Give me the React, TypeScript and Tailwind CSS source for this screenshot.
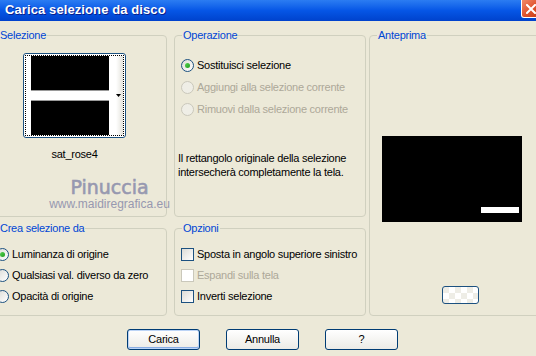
import clsx from "clsx";

const ops = [
  { label: "Sostituisci selezione", checked: true, disabled: false },
  { label: "Aggiungi alla selezione corrente", checked: false, disabled: true },
  { label: "Rimuovi dalla selezione corrente", checked: false, disabled: true },
];

const sources = [
  { label: "Luminanza di origine", checked: true },
  { label: "Qualsiasi val. diverso da zero", checked: false },
  { label: "Opacità di origine", checked: false },
];

const options = [
  { label: "Sposta in angolo superiore sinistro", disabled: false },
  { label: "Espandi sulla tela", disabled: true },
  { label: "Inverti selezione", disabled: false },
];

function Radio({ checked, disabled }: { checked?: boolean; disabled?: boolean }) {
  return (
    <span
      className={clsx(
        "flex h-[13px] w-[13px] shrink-0 items-center justify-center rounded-full border",
        disabled
          ? "border-[#CAC8BB] bg-[#EFEEE6]"
          : "border-[#1C5180] bg-gradient-to-br from-[#DCDCD7] to-white"
      )}
    >
      {checked && <span className="h-[5px] w-[5px] rounded-full bg-gradient-to-br from-[#55D551] to-[#1E9B1E]" />}
    </span>
  );
}

function Checkbox({ disabled }: { disabled?: boolean }) {
  return (
    <span
      className={clsx(
        "h-[13px] w-[13px] shrink-0 border",
        disabled ? "border-[#CAC8BB] bg-white" : "border-[#1C5180] bg-gradient-to-br from-[#DCDCD7] to-white"
      )}
    />
  );
}

function Group({ title, className, children }: { title: string; className?: string; children?: React.ReactNode }) {
  return (
    <fieldset className={clsx("min-w-0 rounded-[4px] border border-[#D0D0BF]", className)}>
      <legend className="ml-[7px] px-[1px] leading-[13px] text-[#0046D5]">{title}</legend>
      {children}
    </fieldset>
  );
}

function Button({ label, primary }: { label: string; primary?: boolean }) {
  return (
    <button
      className={clsx(
        "flex h-[21px] w-[73px] items-center justify-center rounded-[3px] border border-[#003C74] bg-gradient-to-b from-white to-[#ECEBE6] leading-[13px]",
        primary && "shadow-[inset_0_0_0_1px_#BCD4F6,inset_0_-1px_0_1px_#89ADE4]"
      )}
    >
      {label}
    </button>
  );
}

export default function App() {
  return (
    <div className="relative h-[356px] w-[536px] overflow-hidden bg-[#ECE9D8] font-['Liberation_Sans',Arial,sans-serif] text-[11px] tracking-[-0.25px] text-black">
      {/* title bar */}
      <div className="flex h-[21px] items-start justify-between bg-gradient-to-b from-[#2B7CF2] via-[#0656E6] to-[#0042CC]">
        <span className="mt-[2px] pl-[5px] text-[13px] font-bold leading-[16px] tracking-[0.1px] text-white [text-shadow:1px_1px_#0A1F8C]">
          Carica selezione da disco
        </span>
        <span className="-mr-[6px] flex h-[18px] w-[21px] items-center justify-center rounded-b-[3px] border border-t-0 border-white bg-gradient-to-br from-[#F08A6A] via-[#E0532E] to-[#C23A14]">
          <svg width="10" height="10" viewBox="0 0 10 10" className="-ml-[2px]">
            <path d="M1 1 L9 9 M9 1 L1 9" stroke="white" strokeWidth="2" strokeLinecap="square" />
          </svg>
        </span>
      </div>

      {/* body */}
      <div className="-ml-[9px] mt-[8px] flex">
        <div className="flex w-[176px] shrink-0 flex-col gap-[5px]">
          <Group title="Selezione" className="h-[188px]">
            <div className="ml-[31px] mt-[11px] flex w-[103px] flex-col items-center">
              <div className="h-[85px] w-[103px] rounded-[3px] border border-[#1C5180] bg-white p-[1px]">
                <div className="flex h-full border border-dotted border-black pl-[5px]">
                  <div className="flex w-[78px] flex-col">
                    <div className="h-[34px] bg-black" />
                    <div className="h-px bg-[#9A9A9A]" />
                    <div className="h-[9px] bg-white" />
                    <div className="h-px bg-[#9A9A9A]" />
                    <div className="flex-1 bg-black" />
                  </div>
                  <div className="flex flex-1 items-center justify-end bg-gradient-to-r from-white via-white to-[#E4E3DC] pr-[2px]">
                    <svg width="5" height="3" viewBox="0 0 5 3">
                      <path d="M0 0 H5 L2.5 3 Z" fill="black" />
                    </svg>
                  </div>
                </div>
              </div>
              <span className="mt-[10px] leading-[13px]">sat_rose4</span>
            </div>
          </Group>
          <Group title="Crea selezione da" className="h-[94px]">
            <div className="mt-[9px] flex flex-col pl-[4px]">
              {sources.map((s) => (
                <div key={s.label} className="flex h-[21px] items-center gap-[3px]">
                  <Radio checked={s.checked} />
                  <span>{s.label}</span>
                </div>
              ))}
            </div>
          </Group>
        </div>

        <div className="ml-[7px] flex w-[192px] shrink-0 flex-col gap-[5px]">
          <Group title="Operazione" className="h-[188px]">
            <div className="mt-[12px] flex flex-col pl-[6px]">
              {ops.map((o) => (
                <div key={o.label} className="flex h-[22px] items-center gap-[3px]">
                  <Radio checked={o.checked} disabled={o.disabled} />
                  <span className={o.disabled ? "text-[#ACA899]" : ""}>{o.label}</span>
                </div>
              ))}
            </div>
            <p className="mt-[31px] pl-[3px] leading-[14px]">
              Il rettangolo originale della selezione
              <br />
              intersecherà completamente la tela.
            </p>
          </Group>
          <Group title="Opzioni" className="h-[94px]">
            <div className="mt-[9px] flex flex-col pl-[6px]">
              {options.map((o) => (
                <div key={o.label} className="flex h-[21px] items-center gap-[3px]">
                  <Checkbox disabled={o.disabled} />
                  <span className={o.disabled ? "text-[#ACA899]" : ""}>{o.label}</span>
                </div>
              ))}
            </div>
          </Group>
        </div>

        <Group title="Anteprima" className="ml-[3px] h-[287px] w-[180px] shrink-0">
          <div className="ml-[12px] mt-[94px] flex h-[86px] w-[140px] flex-col bg-black pl-[99px] pt-[71px]">
            <div className="h-[6px] w-[38px] bg-white" />
          </div>
          <div className="ml-[72px] mt-[64px] h-[18px] w-[37px] rounded-[3px] border border-[#1C5180] bg-[repeating-conic-gradient(#FFFFFF_0_25%,#EEEDE6_0_50%)] bg-[length:12px_12px]" />
        </Group>
      </div>

      {/* buttons */}
      <div className="mt-[13px] flex gap-[26px] pl-[127px]">
        <Button label="Carica" primary />
        <Button label="Annulla" />
        <Button label="?" />
      </div>

      {/* watermark */}
      <div className="pointer-events-none absolute left-[49px] top-[176px] flex w-[121px] flex-col items-center text-[#8E90AC] opacity-90">
        <span className="font-['DejaVu_Sans',sans-serif] text-[19px] leading-[22px] tracking-normal [-webkit-text-stroke:0.6px_#8E90AC]">
          Pinuccia
        </span>
        <span className="text-[12px] leading-[13px] tracking-normal">www.maidiregrafica.eu</span>
      </div>
    </div>
  );
}
